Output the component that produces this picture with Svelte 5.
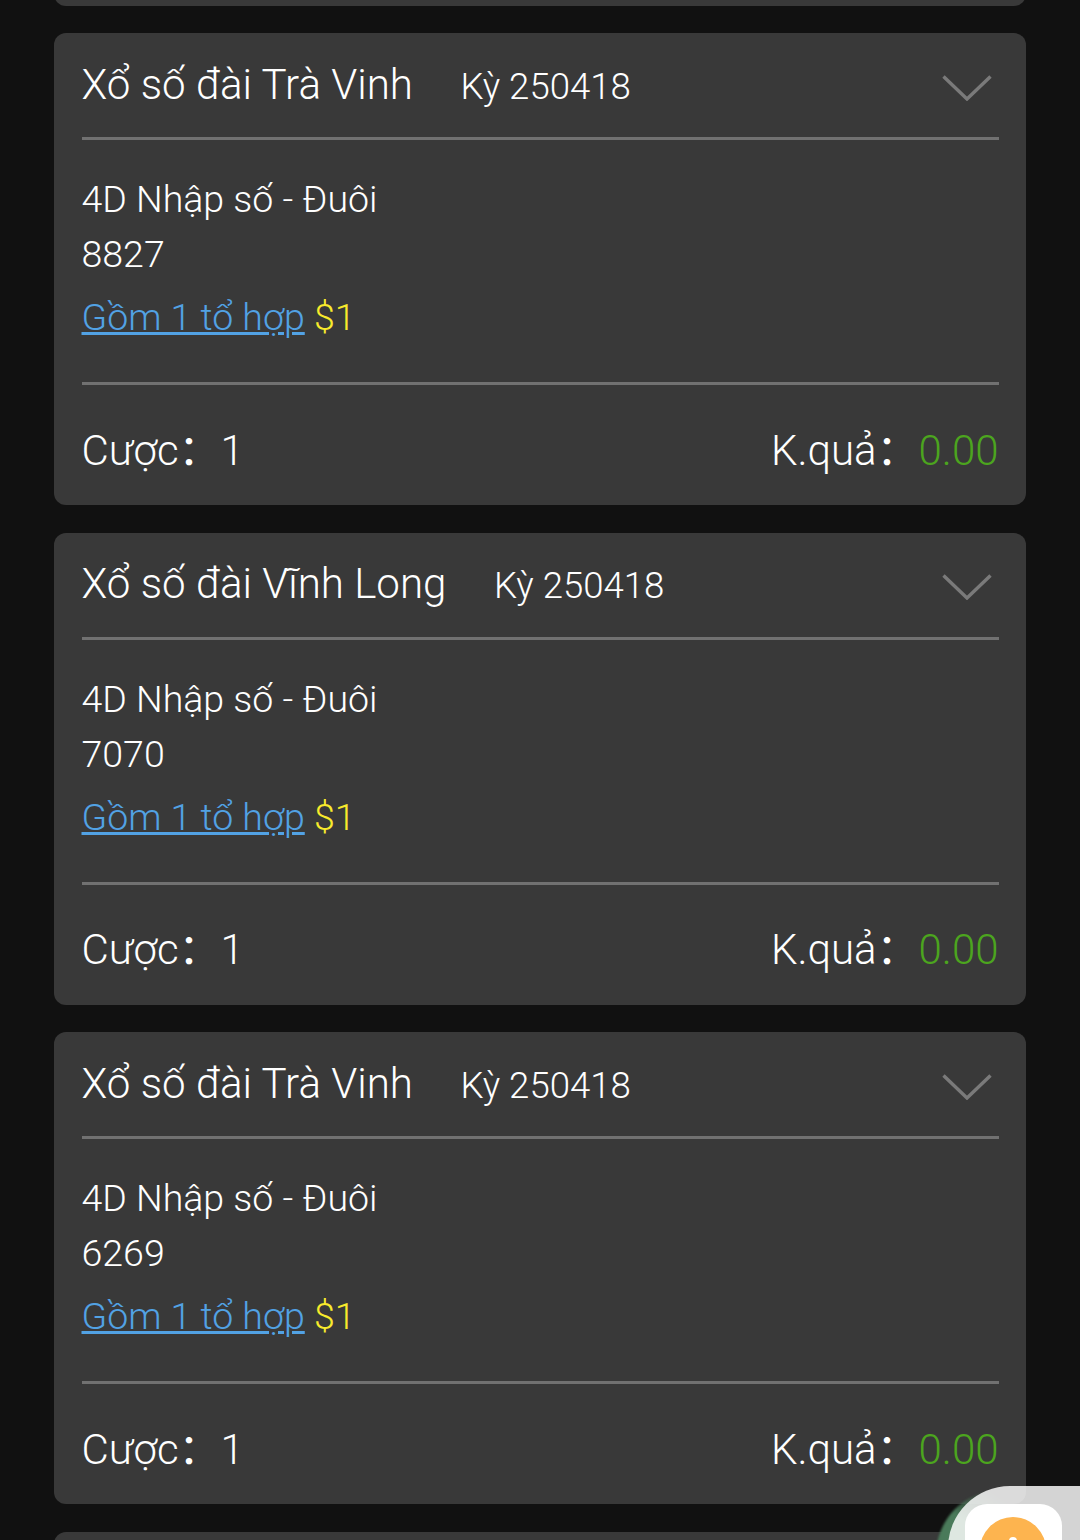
<script lang="ts">
    const bets = [
        { name: "Xổ số đài Cà Mau", num: "0000" },
        { name: "Xổ số đài Trà Vinh", num: "8827" },
        { name: "Xổ số đài Vĩnh Long", num: "7070" },
        { name: "Xổ số đài Trà Vinh", num: "6269" },
        { name: "Xổ số đài Trà Vinh", num: "1234" },
    ];
</script>

<div class="page">
    <div class="list">
        {#each bets as bet}
            <section class="card">
                <header>
                    <span class="title">{bet.name}</span>
                    <span class="period">Kỳ 250418</span>
                    <svg class="chevron" viewBox="0 0 50 26" width="50" height="26" aria-hidden="true">
                        <path d="M1.5 1.5 L25 24 L48.5 1.5" fill="none" stroke="#7a7a7a" stroke-width="3.4" />
                    </svg>
                </header>
                <div class="detail">
                    <div class="line">4D Nhập số - Đuôi</div>
                    <div class="line">{bet.num}</div>
                    <div class="line combo"><a href="#combo">Gồm 1 tổ hợp</a> <span class="price">$1</span></div>
                </div>
                <footer>
                    <div>Cược<span class="colon">：</span>1</div>
                    <div>K.quả<span class="colon">：</span><span class="win">0.00</span></div>
                </footer>
            </section>
        {/each}
    </div>

    <div class="float">
        <div class="arc"></div>
        <div class="shell">
            <div class="tile">
                <div class="coin"><i></i></div>
            </div>
        </div>
    </div>
</div>

<style>
    :global(body) {
        background: #111111;
    }

    .page {
        position: relative;
        height: 1540px;
        overflow: hidden;
        background: #111111;
        font-family: Roboto, "Noto Sans", sans-serif;
        font-weight: 300;
        color: #fff;
    }

    .list {
        display: flex;
        flex-direction: column;
        gap: 27.5px;
        margin: -466.5px 54px 0;
    }

    .card {
        flex: none;
        height: 472px;
        box-sizing: border-box;
        padding: 0 27px 0 28px;
        display: flex;
        flex-direction: column;
        background: #393939;
        border-radius: 12px;
    }

    header {
        flex: none;
        height: 107px;
        box-sizing: border-box;
        display: flex;
        align-items: center;
        border-bottom: 3px solid #717171;
    }

    .title {
        font-size: 42.1px;
        line-height: 50px;
        margin-top: -1px;
        margin-left: -0.5px;
    }

    .period {
        font-size: 36.6px;
        margin-left: 47.5px;
        margin-top: 2px;
    }

    .chevron {
        margin-left: auto;
        margin-right: 7px;
        margin-top: 5px;
    }

    .detail {
        flex: none;
        height: 245px;
        box-sizing: border-box;
        padding-top: 32px;
        border-bottom: 3px solid #717171;
        font-size: 37.5px;
    }

    .line {
        height: 55px;
        line-height: 55px;
        margin-left: -0.5px;
    }

    .combo {
        height: 63px;
        line-height: 71px;
    }

    .combo a {
        color: #52a2e4;
        text-decoration: underline;
        text-decoration-thickness: 3px;
    }

    .price {
        color: #f8ea2c;
    }

    footer {
        flex: 1;
        display: flex;
        justify-content: space-between;
        align-items: center;
        font-size: 42px;
        padding: 2px 0.5px 0 0;
        margin-left: -0.5px;
    }

    .colon {
        font-family: "Noto Sans CJK SC", sans-serif;
        font-weight: 400;
    }

    .win {
        color: #4ca51e;
    }

    .float {
        position: absolute;
        left: 930px;
        top: 1480px;
        width: 150px;
        height: 60px;
        overflow: hidden;
    }

    .arc {
        position: absolute;
        left: 6px;
        top: 10px;
        width: 130px;
        height: 130px;
        border-radius: 50%;
        background: linear-gradient(215deg, transparent 24%, #4a7a5a 46%);
        filter: blur(1px);
    }

    .shell {
        position: absolute;
        left: 18px;
        top: 6px;
        width: 180px;
        height: 120px;
        border-radius: 62px 0 0 0;
        background: rgba(255, 255, 255, 0.82);
    }

    .tile {
        position: absolute;
        left: 17px;
        top: 18px;
        width: 97px;
        height: 97px;
        border-radius: 22px;
        background: #fff;
    }

    .coin {
        position: absolute;
        left: 15px;
        top: 13px;
        width: 66px;
        height: 66px;
        border-radius: 50%;
        background: #fdb44f;
    }

    .coin i {
        position: absolute;
        left: 29px;
        top: 20px;
        width: 8px;
        height: 8px;
        border-radius: 50%;
        background: #fff;
    }
</style>
